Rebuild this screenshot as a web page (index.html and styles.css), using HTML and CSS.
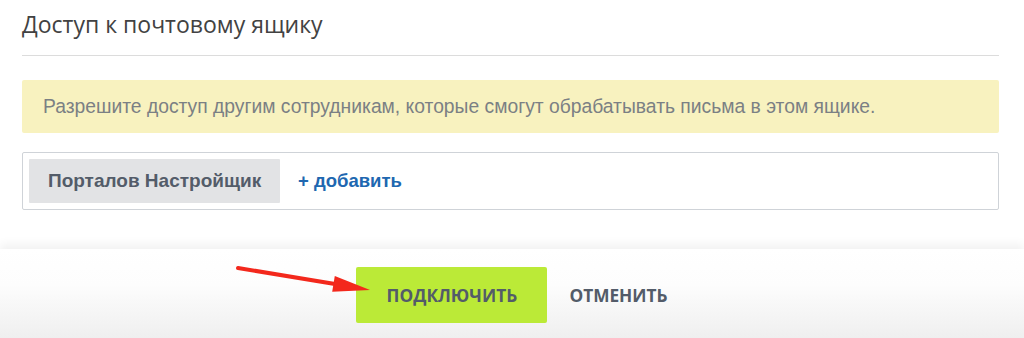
FILE: index.html
```html
<!DOCTYPE html>
<html lang="ru">
<head>
<meta charset="utf-8">
<title>Доступ к почтовому ящику</title>
<link rel="stylesheet" href="styles.css">
</head>
<body>
<div class="section">
  <div class="title">Доступ к почтовому ящику</div>
  <div class="notice">Разрешите доступ другим сотрудникам, которые смогут обрабатывать письма в этом ящике.</div>
  <div class="users">
    <span class="tag">Порталов Настройщик</span>
    <a class="add" href="#">+ добавить</a>
  </div>
</div>
<div class="footer">
  <button class="btn btn-connect">ПОДКЛЮЧИТЬ</button>
  <button class="btn btn-cancel">ОТМЕНИТЬ</button>
  <svg class="arrow" width="1024" height="89" viewBox="0 0 1024 89">
    <line x1="238" y1="19" x2="338" y2="35.5" stroke="#f3281c" stroke-width="4" stroke-linecap="round"/>
    <polygon points="334.8,27 370,41 332.2,42.8" fill="#f3281c"/>
  </svg>
</div>
</body>
</html>
```
FILE: styles.css
```css
html, body {
  margin: 0;
  padding: 0;
  background: #fff;
}
body {
  width: 1024px;
  height: 338px;
  overflow: hidden;
  font-family: "Liberation Sans", Arial, sans-serif;
}
.section {
  padding: 0 25px 0 22px;
}
.title {
  font-family: "Open Sans", sans-serif;
  font-size: 23px;
  line-height: 30px;
  color: #424242;
  padding-top: 9px;
  padding-bottom: 16px;
  border-bottom: 1px solid #dcdcdc;
}
.notice {
  margin-top: 24px;
  height: 53px;
  box-sizing: border-box;
  display: flex;
  align-items: center;
  padding: 0 21px;
  background: #f8f2bf;
  border-radius: 2px;
  color: #7b8084;
  font-size: 19.3px;
  white-space: nowrap;
}
.users {
  margin-top: 19px;
  height: 58px;
  box-sizing: border-box;
  border: 1px solid #cfd3d8;
  border-radius: 2px;
  padding: 6px;
  display: flex;
  align-items: center;
}
.tag {
  display: flex;
  align-items: center;
  flex: none;
  white-space: nowrap;
  height: 44px;
  width: 251px;
  box-sizing: border-box;
  padding: 0 19px;
  background: #e2e3e5;
  border-radius: 1px;
  color: #535c69;
  font-weight: bold;
  font-size: 19px;
}
.add {
  margin-left: 18px;
  color: #2067b0;
  font-weight: bold;
  font-size: 18.5px;
  text-decoration: none;
  white-space: nowrap;
}
.footer {
  position: relative;
  margin-top: 39px;
  height: 89px;
  box-sizing: border-box;
  padding-top: 18px;
  display: flex;
  justify-content: center;
  align-items: flex-start;
  background: linear-gradient(#ffffff 0%, #fdfdfd 40%, #efefef 100%);
  box-shadow: 0 -5px 9px rgba(0, 0, 0, 0.055);
}
.btn {
  border: none;
  font-family: "Open Sans", sans-serif;
  font-weight: bold;
  font-size: 17.3px;
  color: #535c69;
  height: 56px;
  padding: 0;
  cursor: pointer;
}
.btn-connect {
  width: 191px;
  background: #bbea37;
  border-radius: 2px;
}
.btn-cancel {
  background: transparent;
  margin-left: 22px;
}
.arrow {
  position: absolute;
  left: 0;
  top: 0;
  pointer-events: none;
}
```
